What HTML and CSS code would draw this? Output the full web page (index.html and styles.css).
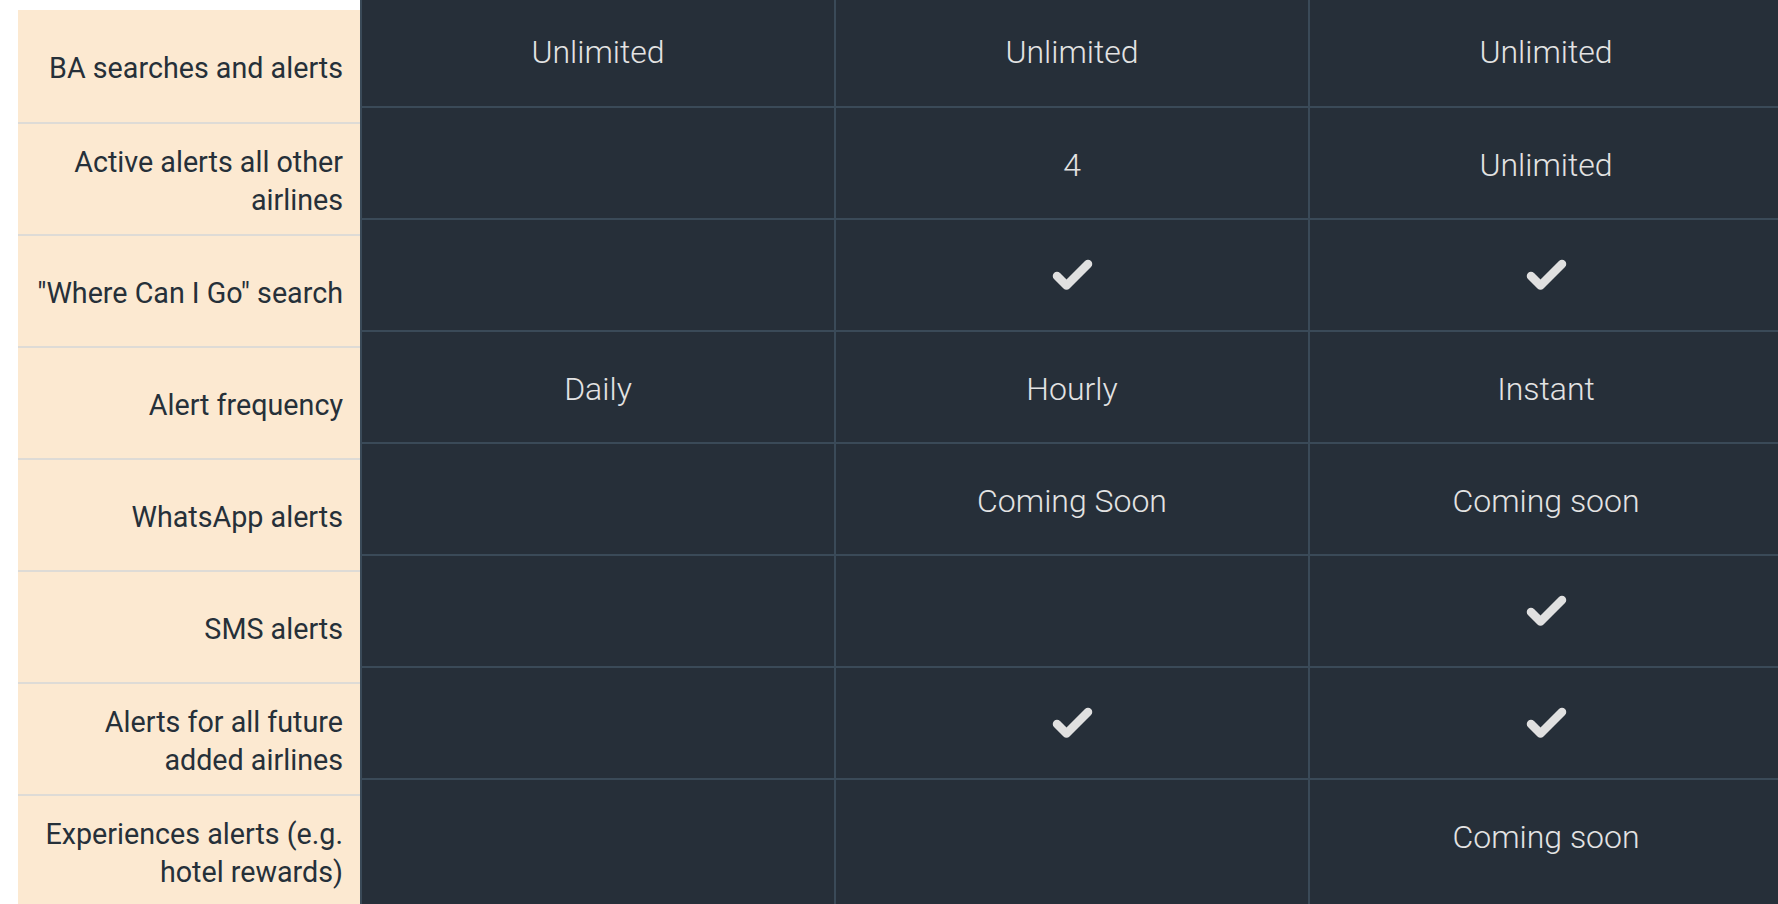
FILE: index.html
```html
<!DOCTYPE html>
<html lang="en">
<head>
<meta charset="utf-8">
<title>Plan comparison</title>
<link rel="stylesheet" href="styles.css">
</head>
<body>
<div class="compare">
  <div class="labels">
    <div class="label">BA searches and alerts</div>
    <div class="label">Active alerts all other airlines</div>
    <div class="label">"Where Can I Go" search</div>
    <div class="label">Alert frequency</div>
    <div class="label">WhatsApp alerts</div>
    <div class="label">SMS alerts</div>
    <div class="label">Alerts for all future added airlines</div>
    <div class="label">Experiences alerts (e.g. hotel rewards)</div>
  </div>
  <div class="grid">
    <div class="cell">Unlimited</div><div class="cell">Unlimited</div><div class="cell">Unlimited</div>
    <div class="cell"></div><div class="cell">4</div><div class="cell">Unlimited</div>
    <div class="cell"></div>
    <div class="cell"><svg class="check" viewBox="0 0 41 31"><polyline points="5,16 14.5,25.5 36,4"/></svg></div>
    <div class="cell"><svg class="check" viewBox="0 0 41 31"><polyline points="5,16 14.5,25.5 36,4"/></svg></div>
    <div class="cell">Daily</div><div class="cell">Hourly</div><div class="cell">Instant</div>
    <div class="cell"></div><div class="cell">Coming Soon</div><div class="cell">Coming soon</div>
    <div class="cell"></div><div class="cell"></div>
    <div class="cell"><svg class="check" viewBox="0 0 41 31"><polyline points="5,16 14.5,25.5 36,4"/></svg></div>
    <div class="cell"></div>
    <div class="cell"><svg class="check" viewBox="0 0 41 31"><polyline points="5,16 14.5,25.5 36,4"/></svg></div>
    <div class="cell"><svg class="check" viewBox="0 0 41 31"><polyline points="5,16 14.5,25.5 36,4"/></svg></div>
    <div class="cell"></div><div class="cell"></div><div class="cell">Coming soon</div>
    <div class="cell spacer"></div><div class="cell spacer"></div><div class="cell spacer"></div>
  </div>
</div>
</body>
</html>
```

FILE: styles.css
```css
* { box-sizing: border-box; }
html, body { margin: 0; padding: 0; background: #ffffff; overflow: hidden; }
body { font-family: Roboto, "Liberation Sans", sans-serif; }

.compare {
  display: flex;
  align-items: flex-start;
  margin-top: -6px;
  width: 1782px;
}

.labels {
  flex: 0 0 342px;
  margin: 16px 0 0 18px;
  background: #fce9d1;
}

.label {
  height: 112px;
  display: flex;
  align-items: center;
  justify-content: flex-end;
  text-align: right;
  padding: 5px 17px 0 6px;
  border-top: 2px solid #dedbd6;
  color: #263039;
  font-size: 28.7px;
  line-height: 37.4px;
  font-weight: 400;
}
.label:first-child { border-top: 0; }

.grid {
  flex: 0 0 1422px;
  display: grid;
  grid-template-columns: repeat(3, 474px);
  grid-template-rows: repeat(8, 112px) 40px;
  background: #262f39;
}

.cell {
  display: flex;
  align-items: center;
  justify-content: center;
  padding-top: 4px;
  border-left: 2px solid #3a4a58;
  border-top: 2px solid #3a4a58;
  color: #e3e3e3;
  font-size: 32px;
  font-weight: 300;
}
.cell:nth-child(-n+3),
.cell.spacer { border-top: 0; }

.check {
  width: 41px;
  height: 31px;
  overflow: visible;
  margin-top: -4px;
}
.check polyline {
  fill: none;
  stroke: #e0e0e0;
  stroke-width: 8.5;
  stroke-linecap: round;
  stroke-linejoin: round;
}
```
